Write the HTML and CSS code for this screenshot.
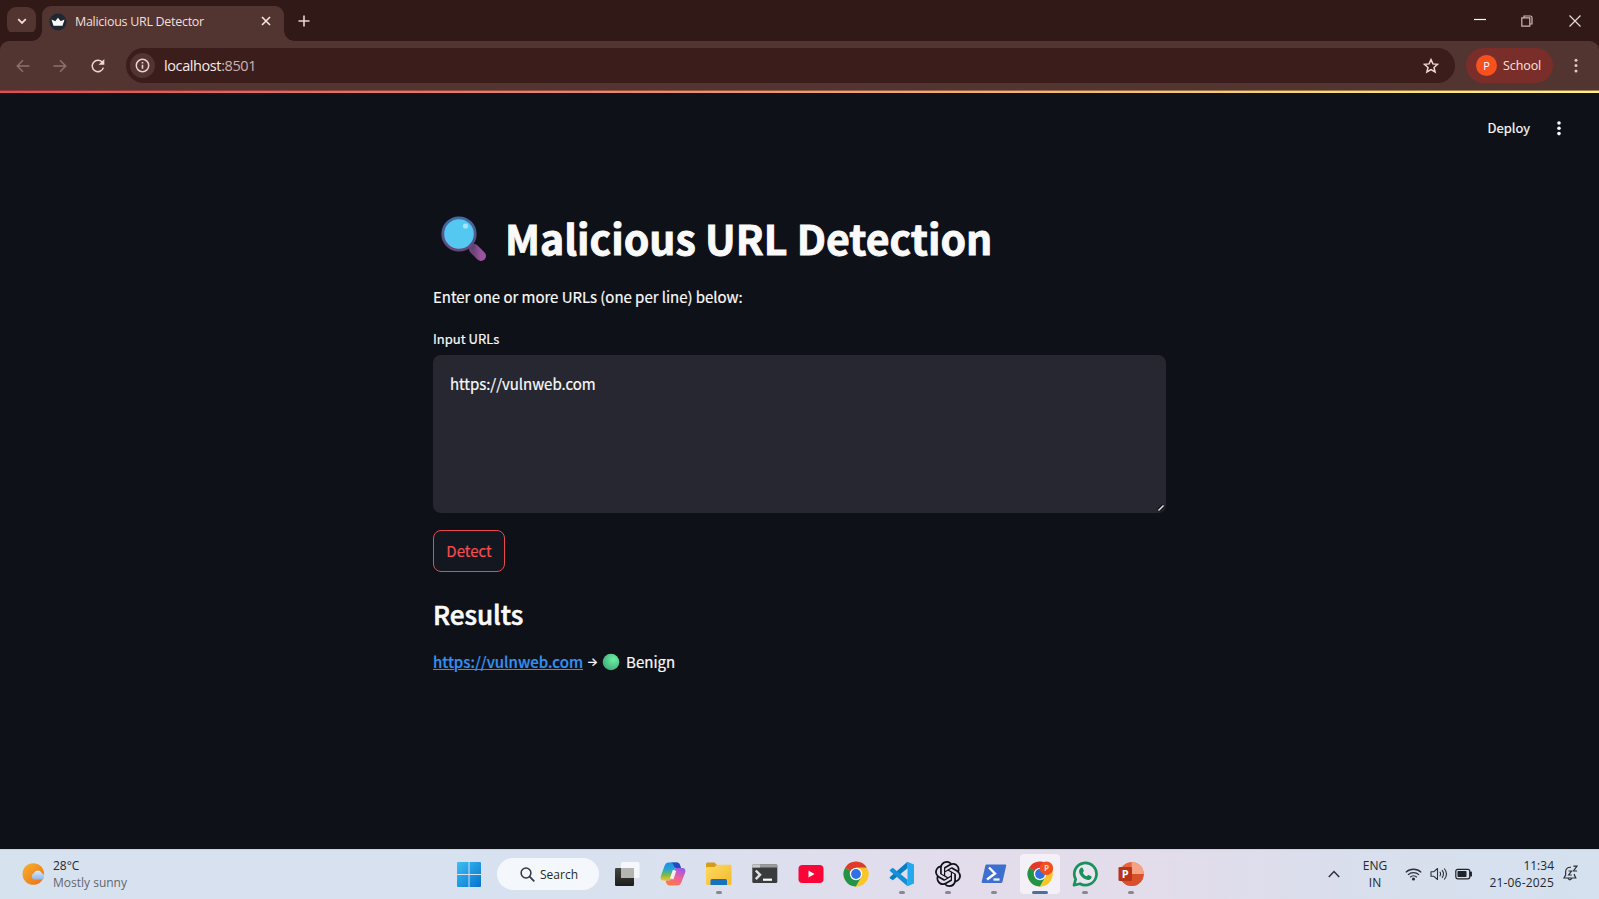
FILE: index.html
```html
<!DOCTYPE html>
<html lang="en">
<head>
<meta charset="utf-8">
<title>Malicious URL Detector</title>
<link rel="stylesheet" href="styles.css">
</head>
<body>
<div class="screen">
  <header class="titlebar">
    <button class="tab-search" aria-label="Search tabs"><svg width="10" height="7" viewBox="0 0 10 7"><path d="M1.2 1.2 5 5 8.800 1.200" fill="none" stroke="#f3dcd9" stroke-width="1.800"/></svg></button>
    <div class="tab">
      <svg class="favicon" width="18" height="18" viewBox="0 0 18 18"><circle cx="9" cy="9" r="8.500" fill="#1f2733"/><path d="M2.500 6.600 6.300 8.300 9 4.800l2.700 3.500 3.800-1.700-2 6.200h-9z" fill="#fff"/></svg>
      <span class="tab-title">Malicious URL Detector</span>
      <svg class="tab-close" width="10" height="10" viewBox="0 0 10 10"><path d="M1 1l8 8M9 1 1 9" stroke="#f8e5e2" stroke-width="1.600"/></svg>
    </div>
    <svg class="new-tab" width="12" height="12" viewBox="0 0 12 12"><path d="M6 .5v11M.5 6h11" stroke="#ecd3d0" stroke-width="1.600"/></svg>
    <div class="window-buttons">
      <svg width="12" height="12" viewBox="0 0 12 12"><path d="M0 4.500h12" stroke="#fff" stroke-width="1.200"/></svg>
      <svg width="12" height="12" viewBox="0 0 12 12"><path d="M.8 2.800h8v8.400h-8zM3 2.800V1h6.300q1.700 0 1.700 1.700V9H9" fill="none" stroke="#cdb8b5" stroke-width="1.200"/></svg>
      <svg width="12" height="12" viewBox="0 0 12 12"><path d="M.5.5l11 11M11.500.5l-11 11" stroke="#e8dcda" stroke-width="1.200"/></svg>
    </div>
  </header>
  <nav class="toolbar">
    <svg class="nav-icon dim" width="14" height="14" viewBox="0 0 14 14"><path d="M13.500 7H1.500M7 1.200 1.300 7 7 12.800"/></svg>
    <svg class="nav-icon dim" width="14" height="14" viewBox="0 0 14 14"><path d="M.5 7h12M7 1.200 12.700 7 7 12.800"/></svg>
    <svg class="nav-icon" width="14" height="14" viewBox="0 0 14 14"><path d="M12.400 8.600A5.700 5.700 0 1 1 11.600 3.700"/><path d="M13.300 0v5.800H7.500z" class="solid"/></svg>
    <div class="omnibox">
      <span class="site-info"><svg width="15" height="15" viewBox="0 0 15 15"><circle cx="7.500" cy="7.500" r="6.200" fill="none" stroke="#e8d3d0" stroke-width="1.500"/><path d="M7.500 6.700v4M7.500 4v1.600" stroke="#e8d3d0" stroke-width="1.600"/></svg></span>
      <span class="address">localhost<span class="port">:8501</span></span>
      <svg class="star" width="16" height="16" viewBox="0 0 16 16"><path d="M8 1.600l1.900 4.300 4.700.4-3.600 3.100 1.100 4.600L8 11.600 3.900 14 5 9.400 1.400 6.300l4.700-.4z" fill="none" stroke="#eed8d5" stroke-width="1.500"/></svg>
    </div>
    <div class="profile"><span class="avatar">P</span><span class="profile-name">School</span></div>
    <svg class="browser-menu" width="4" height="16" viewBox="0 0 4 16"><g fill="#dfc9c6"><circle cx="2" cy="2.200" r="1.500"/><circle cx="2" cy="7.600" r="1.500"/><circle cx="2" cy="13" r="1.500"/></g></svg>
  </nav>
  <div class="decoration"></div>
  <main class="page">
    <div class="app-header">
      <span class="deploy">Deploy</span>
      <svg width="4" height="16" viewBox="0 0 4 16"><g fill="#fafafa"><circle cx="2" cy="3" r="1.800"/><circle cx="2" cy="8.300" r="1.800"/><circle cx="2" cy="13.600" r="1.800"/></g></svg>
    </div>
    <section class="content">
      <h1 class="headline">
        <svg class="lens" width="46" height="46" viewBox="0 0 46 46">
          <defs><linearGradient id="rim" x1="0" y1="0" x2="0" y2="1"><stop offset="0" stop-color="#3d6da5"/><stop offset="1" stop-color="#684578"/></linearGradient><linearGradient id="handle" x1="0" y1="0" x2="1" y2="0"><stop offset="0" stop-color="#704379"/><stop offset="1" stop-color="#9b559e"/></linearGradient></defs>
          <path d="M33 33l7 7" stroke="url(#handle)" stroke-width="10" stroke-linecap="round"/>
          <path d="M29 29l4 4" stroke="#5d4275" stroke-width="4"/>
          <circle cx="18" cy="18" r="16.200" fill="#55c8f2" stroke="url(#rim)" stroke-width="2.800"/>
          <circle cx="24.500" cy="10" r="2.600" fill="#a4e3fa"/>
        </svg>
        <span class="headline-text">Malicious URL Detection</span>
      </h1>
      <p class="intro">Enter one or more URLs (one per line) below:</p>
      <label class="field-label">Input URLs</label>
      <div class="textarea">
        <span class="value">https://vulnweb.com</span>
        <svg class="grip" width="8" height="8" viewBox="0 0 8 8"><path d="M1.500 6.500l5-5" stroke="#111217" stroke-width="4"/><path d="M1.500 6.500l5-5" stroke="#e4e4e4" stroke-width="1.500"/></svg>
      </div>
      <button class="detect"><span>Detect</span></button>
      <h2 class="results">Results</h2>
      <p class="result"><a class="result-link">https://vulnweb.com</a><span class="arrow">→</span><svg class="dot" width="18" height="18" viewBox="0 0 18 18"><defs><radialGradient id="green" cx=".65" cy=".35" r=".75"><stop offset="0" stop-color="#6bf0a2"/><stop offset="1" stop-color="#3fa878"/></radialGradient></defs><circle cx="9" cy="9" r="8.300" fill="url(#green)"/></svg><span class="verdict">Benign</span></p>
    </section>
  </main>
  <footer class="taskbar">
    <div class="weather">
      <svg width="24" height="24" viewBox="0 0 24 24"><defs><linearGradient id="sun" x1="0" y1="0" x2="1" y2="1"><stop offset="0" stop-color="#f5b32c"/><stop offset="1" stop-color="#ec6d18"/></linearGradient><linearGradient id="cloud" x1="0" y1="0" x2="0" y2="1"><stop offset="0" stop-color="#d9eafd"/><stop offset="1" stop-color="#8fb8ee"/></linearGradient></defs><circle cx="11.300" cy="12" r="10.800" fill="url(#sun)"/><path d="M11.500 17.500a3.500 3.500 0 0 1 .3-6.200 4.300 4.300 0 0 1 8-.3 3.500 3.500 0 0 1 .4 6.500z" fill="url(#cloud)"/></svg>
      <div class="weather-text"><span class="temp">28°C</span><span class="sky">Mostly sunny</span></div>
    </div>
    <div class="dock">
      <svg class="start" width="24" height="25" viewBox="0 0 24 25"><defs><linearGradient id="win" x1="0" y1="0" x2="1" y2="1"><stop offset="0" stop-color="#3cc0f4"/><stop offset="1" stop-color="#0671ce"/></linearGradient></defs><path d="M1 0h10.500v12H0V1q0-1 1-1zM12.500 0H23q1 0 1 1v11H12.500zM0 13h11.500v12H1q-1 0-1-1zM12.500 13H24v11q0 1-1 1H12.500z" fill="url(#win)"/></svg>
      <div class="search"><svg width="15" height="15" viewBox="0 0 15 15"><circle cx="6" cy="6" r="4.900" fill="none" stroke="#333942" stroke-width="1.500"/><path d="M9.600 9.600l4.700 4.700" stroke="#333942" stroke-width="1.700"/></svg><span>Search</span></div>
      <div class="slot"><svg width="26" height="26" viewBox="0 0 26 26"><defs><linearGradient id="tv" x1="0" y1="0" x2="0" y2="1"><stop offset="0" stop-color="#45463f"/><stop offset="1" stop-color="#1c1d1b"/></linearGradient></defs><rect x="1" y="7" width="19" height="18" rx="1.200" fill="url(#tv)"/><rect x="7" y="1" width="18.500" height="16" rx="1.500" fill="#fff" opacity=".72"/><path d="M7 7h13v10H7z" fill="#b4b5b1"/></svg></div>
      <div class="slot"><svg width="26" height="26" viewBox="0 0 26 26"><defs><linearGradient id="cpa" x1="0" y1="0" x2="0" y2="1"><stop offset="0" stop-color="#1c8eea"/><stop offset=".4" stop-color="#27a5cf"/><stop offset=".7" stop-color="#83ba40"/><stop offset="1" stop-color="#f1c72a"/></linearGradient><linearGradient id="cpb" x1=".7" y1="0" x2=".3" y2="1"><stop offset="0" stop-color="#9a5ae8"/><stop offset=".5" stop-color="#f0609a"/><stop offset="1" stop-color="#fb7a45"/></linearGradient></defs><path d="M9 1.500h8c3 0 3.300 4 4 5.500h-4c-2 0-2.600 1-3.200 3L11 18.500c-.5 1-1 1-2 1H4c-3 0-4-2-3-5L4.500 5C5.500 2.500 6.500 1.500 9 1.500z" fill="url(#cpa)"/><path d="M10 1.500h7c3 0 3.300 4 4 5.500h-5c-2.500 0-1.500-5.500-6-5.500z" fill="#2348c5"/><path d="M17 24.500H9.500c-3 0-3.300-3.500-4-5H9c2 0 2.600-1.500 3.200-3.500L14.500 8.500c.5-1 1.200-1.500 2.500-1.500h5c3 0 4 2 3 5L21.500 21c-1 2.500-2 3.500-4.500 3.500z" fill="url(#cpb)"/><path d="M14.600 9.300l-3 8.500" stroke="#f3eef6" stroke-width="3.600"/></svg></div>
      <div class="slot running"><svg width="26" height="24" viewBox="0 0 26 24"><defs><linearGradient id="fold" x1="0" y1="0" x2="1" y2="1"><stop offset="0" stop-color="#ffda5f"/><stop offset="1" stop-color="#f2b92e"/></linearGradient></defs><path d="M0 2q0-1.500 1.500-1.500h7L11 3v5H0z" fill="#d69b17"/><path d="M0 6q0-1 1-1h7.500L11 2.700h13.500q1 0 1 1V21.500q0 1.500-1.500 1.500H1.500Q0 23 0 21.500z" fill="url(#fold)"/><path d="M4.500 23v-4.500q0-1.500 1.500-1.500h13.500q1.500 0 1.500 1.500V23z" fill="#1672bd"/></svg></div>
      <div class="slot"><svg width="26" height="20" viewBox="0 0 26 20"><rect x=".3" y=".5" width="25" height="18.500" rx="1.200" fill="#3a3b3d"/><path d="M.3 3.500V1.700q0-1.200 1.200-1.200H24q1.300 0 1.300 1.200v1.800z" fill="#999b9e"/><path d="M.3 1.700q0-1.200 1.200-1.200H8v3H.3z" fill="#c8c9cb"/><path d="M3.800 6.500 8 10.800l-4.200 4.300" fill="none" stroke="#dedfe0" stroke-width="2.500"/><path d="M11 15.700h9" stroke="#fff" stroke-width="2.200"/></svg></div>
      <div class="slot"><svg width="26" height="18" viewBox="0 0 26 18"><rect x=".5" width="25" height="18" rx="4" fill="#fb0438"/><path d="M10.500 5.500v7l6-3.500z" fill="#fff"/></svg></div>
      <div class="slot"><svg width="26" height="26" viewBox="0 0 26 26"><use href="#chrome-mark"/></svg></div>
      <div class="slot running"><svg width="26" height="26" viewBox="0 0 26 26"><path d="M18.500.8 25 3.500v19l-6.500 2.700z" fill="#24a8ee"/><path d="M18.500.8v6.500L3.800 19.300 1 17.300q-.8-.6 0-1.300z" fill="#087dc4"/><path d="M18.500 25.200v-6.500L3.800 6.700 1 8.700q-.8.600 0 1.300z" fill="#1490d7"/></svg></div>
      <div class="slot running"><svg width="26" height="26" viewBox="0 0 24 24"><path fill="#111217" d="M22.2819 9.8211a5.9847 5.9847 0 0 0-.5157-4.9108 6.0462 6.0462 0 0 0-6.5098-2.9A6.0651 6.0651 0 0 0 4.9807 4.1818a5.9847 5.9847 0 0 0-3.9977 2.9 6.0462 6.0462 0 0 0 .7427 7.0966 5.98 5.98 0 0 0 .511 4.9107 6.051 6.051 0 0 0 6.5146 2.9001A5.9847 5.9847 0 0 0 13.2599 24a6.0557 6.0557 0 0 0 5.7718-4.2058 5.9894 5.9894 0 0 0 3.9977-2.9001 6.0557 6.0557 0 0 0-.7475-7.0729zm-9.022 12.6081a4.4755 4.4755 0 0 1-2.8764-1.0408l.1419-.0804 4.7783-2.7582a.7948.7948 0 0 0 .3927-.6813v-6.7369l2.02 1.1686a.071.071 0 0 1 .038.052v5.5826a4.504 4.504 0 0 1-4.4945 4.4944zm-9.6607-4.1254a4.4708 4.4708 0 0 1-.5346-3.0137l.142.0852 4.783 2.7582a.7712.7712 0 0 0 .7806 0l5.8428-3.3685v2.3324a.0804.0804 0 0 1-.0332.0615L9.74 19.9502a4.4992 4.4992 0 0 1-6.1408-1.6464zM2.3408 7.8956a4.485 4.485 0 0 1 2.3655-1.9728V11.6a.7664.7664 0 0 0 .3879.6765l5.8144 3.3543-2.0201 1.1685a.0757.0757 0 0 1-.071 0l-4.8303-2.7865A4.504 4.504 0 0 1 2.3408 7.872zm16.5963 3.8558L13.1038 8.364 15.1192 7.2a.0757.0757 0 0 1 .071 0l4.8303 2.7913a4.4944 4.4944 0 0 1-.6765 8.1042v-5.6772a.79.79 0 0 0-.407-.667zm2.0107-3.0231l-.142-.0852-4.7735-2.7818a.7759.7759 0 0 0-.7854 0L9.409 9.2297V6.8974a.0662.0662 0 0 1 .0284-.0615l4.8303-2.7866a4.4992 4.4992 0 0 1 6.6802 4.66zM8.3065 12.863l-2.02-1.1638a.0804.0804 0 0 1-.038-.0567V6.0742a4.4992 4.4992 0 0 1 7.3757-3.4537l-.142.0805L8.704 5.459a.7948.7948 0 0 0-.3927.6813zm1.0976-2.3654l2.602-1.4998 2.6069 1.4998v2.9994l-2.5974 1.4997-2.6067-1.4997Z"/></svg></div>
      <div class="slot running"><svg width="26" height="20" viewBox="0 0 26 20"><path d="M5.500.5h18.800q1.200 0 .9 1.200l-3.700 16q-.3 1.300-1.500 1.300H1.700q-1.300 0-1-1.300l3.600-16Q4.500.5 5.500.5z" fill="#3c6fd0"/><path d="M8 3.500l6 6-8 6" fill="none" stroke="#fff" stroke-width="2.400"/><path d="M12.500 15.500h6" stroke="#fff" stroke-width="2.200"/></svg></div>
      <div class="slot active"><svg width="26" height="26" viewBox="0 0 26 26"><defs><g id="chrome-mark"><circle cx="13" cy="13" r="12.500" fill="#fbc62b"/><path d="M13 13 2.170 6.750A12.500 12.500 0 0 1 23.830 6.750L13 6.750z" fill="#e03a2f"/><path d="M13 13 2.170 6.750A12.500 12.500 0 0 0 13 25.500L18.410 16.120z" fill="#239348"/><path d="M13 6.750H23.830A12.500 12.500 0 0 1 13 25.500L18.410 16.120z" fill="#fbc62b"/><circle cx="13" cy="13" r="6.200" fill="#fff"/><circle cx="13" cy="13" r="4.900" fill="#2f70e2"/></g></defs><use href="#chrome-mark"/><circle cx="19.500" cy="7.300" r="6.700" fill="#f4501e"/><text x="19.500" y="10.300" class="badge-letter">P</text></svg></div>
      <div class="slot running"><svg width="26" height="26" viewBox="0 0 26 26"><path d="M2 24.200l1.700-5.800A11.100 11.100 0 1 1 8 22.700z" fill="#ece4f1" stroke="#18925a" stroke-width="2.700" stroke-linejoin="round"/><path d="M8.700 7c.6-.7 1.600-.7 2 .1l1.100 2.500c.3.800-.9 1.700-.9 2.100.8 1.700 2 2.800 3.700 3.500.5.100 1.300-1.300 2-1.100l2.600 1.200c.9.500.3 2-.4 2.700-1.300 1.200-3.400 1.100-5.400.2-2.900-1.300-5-3.400-6-6-.7-2-.2-3.900 1.300-5.200z" fill="#18925a"/></svg></div>
      <div class="slot running"><svg width="26" height="26" viewBox="0 0 26 26"><circle cx="13.700" cy="13" r="12" fill="#e8643d"/><path d="M13.700 1a12 12 0 0 1 12 12h-12z" fill="#f6a284"/><path d="M1.700 13h24a12 12 0 0 1-24 0z" fill="#d8502c"/><rect x=".5" y="6" width="13.500" height="14" rx="1.300" fill="#b83317"/><text x="7.200" y="17" class="ppt-letter">P</text></svg></div>
    </div>
    <div class="tray">
      <svg class="chev" width="12" height="8" viewBox="0 0 12 8"><path d="M.8 7 6 1.500 11.200 7" fill="none" stroke="#2c3037" stroke-width="1.500"/></svg>
      <div class="lang"><span>ENG</span><span>IN</span></div>
      <svg class="wifi" width="17" height="14" viewBox="0 0 17 14"><g fill="none" stroke="#2c3037" stroke-width="1.300"><path d="M.8 5.400a11 11 0 0 1 15.400 0M3 7.900a7.800 7.800 0 0 1 11 0M5.200 10.300a4.700 4.700 0 0 1 6.600 0"/></g><circle cx="8.500" cy="12" r="1.600" fill="#2c3037"/></svg>
      <svg class="volume" width="18" height="14" viewBox="0 0 18 14"><g fill="none" stroke="#2c3037" stroke-width="1.100" stroke-linejoin="round"><path d="M1 4.800h2.600L7.500 1.500v11L3.600 9.200H1z"/><path d="M9.800 4.800q1.600 2.200 0 4.400M12 3.200q3 3.800 0 7.600M14.200 1.500q4.600 5.500 0 11"/></g></svg>
      <svg class="battery" width="18" height="12" viewBox="0 0 18 12"><rect x=".8" y="1.300" width="14" height="9.500" rx="2" fill="none" stroke="#202329" stroke-width="1.200"/><rect x="2.500" y="3" width="9" height="6.100" rx=".8" fill="#202329"/><path d="M15 4.300h1.300v3.500H15z" fill="none" stroke="#202329" stroke-width="1.300"/></svg>
      <div class="clock"><span>11:34</span><span class="date">21-06-2025</span></div>
      <svg class="bell" width="15" height="17" viewBox="0 0 15 17"><g fill="none" stroke="#2c3037" stroke-width="1.200"><path d="M8 2.300C4.500 2 2.600 4 2.600 7v3L1 13h11.800l-1.400-3V9M5 13.300q1.600 3 3.800 0"/><path d="M10.300 1.200h3.600L10.500 6h3.600M5.500 6h3L5.600 10h3.200"/></g></svg>
    </div>
  </footer>
</div>
</body>
</html>
```
FILE: styles.css
```css
* { box-sizing: border-box; }
body { margin: 0; }
h1, h2, p { margin: 0; }
button { margin: 0; padding: 0; border: 0; font: inherit; }
svg { display: block; flex: none; }

.screen {
  width: 1599px;
  height: 899px;
  display: flex;
  flex-direction: column;
  overflow: hidden;
  font-family: "Open Sans", "Noto Sans", sans-serif;
  background: #0e1117;
}

/* Browser frame */
.titlebar {
  height: 41px;
  flex: none;
  display: flex;
  align-items: flex-start;
  padding-left: 7px;
  background: #301916;
}
.tab-search {
  width: 29px;
  height: 28px;
  margin: 7px 6px 0 0;
  border-radius: 9px;
  display: flex;
  align-items: center;
  justify-content: center;
  background: #523431;
}
.tab {
  position: relative;
  width: 242px;
  height: 35px;
  margin-top: 6px;
  padding: 0 13px 0 7px;
  display: flex;
  align-items: center;
  border-radius: 9px 9px 0 0;
  background: #523431;
}
.tab::before, .tab::after {
  content: "";
  position: absolute;
  bottom: 0;
  width: 10px;
  height: 10px;
}
.tab::before { left: -10px; background: radial-gradient(circle at 0 0, transparent 9.500px, #523431 10px); }
.tab::after { right: -10px; background: radial-gradient(circle at 100% 0, transparent 9.500px, #523431 10px); }
.favicon { margin: -4px 8px 0 0; }
.tab-title { flex: 1; margin-top: -5px; font-size: 12.500px; letter-spacing: -0.290px; white-space: nowrap; color: #f3dfdc; }
.tab-close { margin-top: -5px; }
.new-tab { margin: 15px 0 0 14px; }
.window-buttons { margin: 15px 18px 0 auto; display: flex; gap: 36px; }
.window-buttons svg:first-child { margin-right: -1px; }

.toolbar {
  height: 49px;
  flex: none;
  display: flex;
  align-items: center;
  padding: 0 21px 0 16px;
  border-radius: 9px 9px 0 0;
  background: #523431;
  box-shadow: 0 -9px 0 0 #301916;
}
.nav-icon { margin-right: 23px; fill: none; stroke: #eed8d5; stroke-width: 1.500; }
.nav-icon.dim { stroke: #8e706d; stroke-width: 1.500; }
.nav-icon.dim + .nav-icon:not(.dim) { margin-left: 1px; }
.nav-icon .solid { fill: #eed8d5; stroke: none; }
.omnibox {
  width: 1330px;
  height: 35px;
  margin-left: -2px;
  padding: 0 16px 0 4px;
  display: flex;
  align-items: center;
  border-radius: 18px;
  background: #3b1e1b;
}
.site-info { width: 25px; height: 25px; display: grid; place-items: center; border-radius: 50%; background: #523431; }
.address { flex: 1; margin-left: 9px; font-size: 14.500px; letter-spacing: -0.400px; color: #f7e9e7; }
.port { color: #cbb3b0; }
.profile {
  width: 87px;
  height: 35px;
  margin-left: 11px;
  padding-left: 10px;
  display: flex;
  align-items: center;
  border-radius: 18px;
  background: #7a2e29;
}
.avatar { width: 21px; height: 21px; display: grid; place-items: center; border-radius: 50%; font-size: 11px; color: #fff; background: #f9511d; }
.profile-name { margin-left: 6px; font-size: 12.500px; letter-spacing: -0.100px; color: #ffe4df; }
.browser-menu { margin-left: 21px; }
.decoration {
  height: 3px;
  flex: none;
  background:
    linear-gradient(rgba(60, 25, 25, .5) 1px, transparent 1px),
    linear-gradient(90deg, #e04f50 0%, #ef9a6d 50%, #f8e47d 90%, #fff08a 100%);
}

/* Application */
.page {
  height: 756px;
  flex: none;
  font-family: "Noto Sans CJK SC", "Noto Sans", sans-serif;
  color: #fafafa;
  -webkit-text-stroke: 0.200px currentColor;
  background: #0e1117;
}
.app-header { height: 69px; padding-right: 38px; display: flex; align-items: center; justify-content: flex-end; gap: 27px; }
.deploy { font-size: 13px; }
.content { width: 733px; margin: 0 auto; display: flex; flex-direction: column; align-items: flex-start; }
.headline { height: 88px; margin-top: 34px; padding-left: 8px; display: flex; align-items: center; font-weight: 700; line-height: 88px; white-space: nowrap; }
.lens { margin-top: -2px; }
.headline-text { margin: -6px 0 0 18px; font-size: 41px; -webkit-text-stroke: 0.900px currentColor; }
.intro { height: 24px; margin-top: 1px; font-size: 15px; line-height: 24px; letter-spacing: -0.040px; white-space: nowrap; }
.field-label { height: 20px; margin-top: 20px; font-size: 13px; line-height: 20px; white-space: nowrap; }
.textarea { position: relative; width: 733px; height: 158px; margin-top: 6px; padding: 17px; border-radius: 8px; background: #262730; }
.value { display: block; font-size: 15px; line-height: 24px; letter-spacing: -0.040px; }
.grip { position: absolute; right: 1px; bottom: 1px; }
.detect { width: 72px; height: 42px; margin-top: 17px; padding-bottom: 1px; border: 1px solid #e84a4d; border-radius: 8px; font-size: 15px; color: #f84b4e; background: #131720; }
.results { height: 36px; margin-top: 24px; font-size: 26px; font-weight: 500; line-height: 36px; -webkit-text-stroke: 0.600px currentColor; }
.result { height: 24px; margin-top: 18px; display: flex; align-items: center; font-size: 15px; line-height: 24px; white-space: nowrap; }
.result-link { color: #3291f3; text-decoration: underline; font-weight: 500; }
.arrow { width: 19px; display: flex; justify-content: center; font-family: "Inter", sans-serif; font-size: 12px; font-weight: 500; }
.verdict { margin-left: 6px; }

/* Taskbar */
.taskbar {
  height: 50px;
  flex: none;
  display: flex;
  align-items: center;
  border-top: 1px solid #c9d2dd;
  color: #24272d;
  background: linear-gradient(90deg, #d7e2ef 0%, #d9e1ef 40%, #e3dcec 60%, #e3dcea 72%, #d8dfed 86%, #d5e1ef 100%);
}
.weather { width: 435px; padding: 0 0 2px 22px; display: flex; align-items: center; gap: 7px; }
.weather-text { display: flex; flex-direction: column; font-size: 12px; line-height: 17px; }
.sky { color: #60666f; }
.dock { display: flex; align-items: center; height: 49px; padding-left: 22px; }
.search { width: 102px; height: 32px; margin: 0 5.500px 1px 16px; padding-left: 23px; display: flex; align-items: center; gap: 5px; border-radius: 16px; font-size: 12px; background: #f4f7fb; }
.slot { position: relative; width: 45.800px; height: 49px; padding-bottom: 2px; display: grid; place-items: center; }
.slot > svg { position: relative; }
.slot.running::after { content: ""; position: absolute; left: 20px; bottom: 5px; width: 6px; height: 3px; border-radius: 2px; background: #898790; }
.slot.active::before { content: ""; position: absolute; left: 3px; top: 4px; width: 40px; height: 40px; border-radius: 4px; background: #f4f0f8; }
.slot.active::after { content: ""; position: absolute; left: 15px; bottom: 5px; width: 16px; height: 3px; border-radius: 2px; background: #47729b; }
.badge-letter { font: 700 8px "Open Sans", sans-serif; text-anchor: middle; fill: #ffd7c9; }
.ppt-letter { font: 700 11px "Open Sans", sans-serif; text-anchor: middle; fill: #fff; }
.tray { margin-left: auto; padding: 0 21px 2px 0; display: flex; align-items: center; font-size: 12px; line-height: 17px; white-space: nowrap; }
.chev { margin-right: 22px; }
.lang, .clock { display: flex; flex-direction: column; }
.lang { width: 26px; margin-right: 17px; align-items: center; }
.volume { margin-left: 8px; }
.battery { margin-left: 7px; }
.clock { width: 68px; margin-left: 13px; align-items: flex-end; }
.date { letter-spacing: 0.200px; }
.bell { margin-left: 9px; }
```
